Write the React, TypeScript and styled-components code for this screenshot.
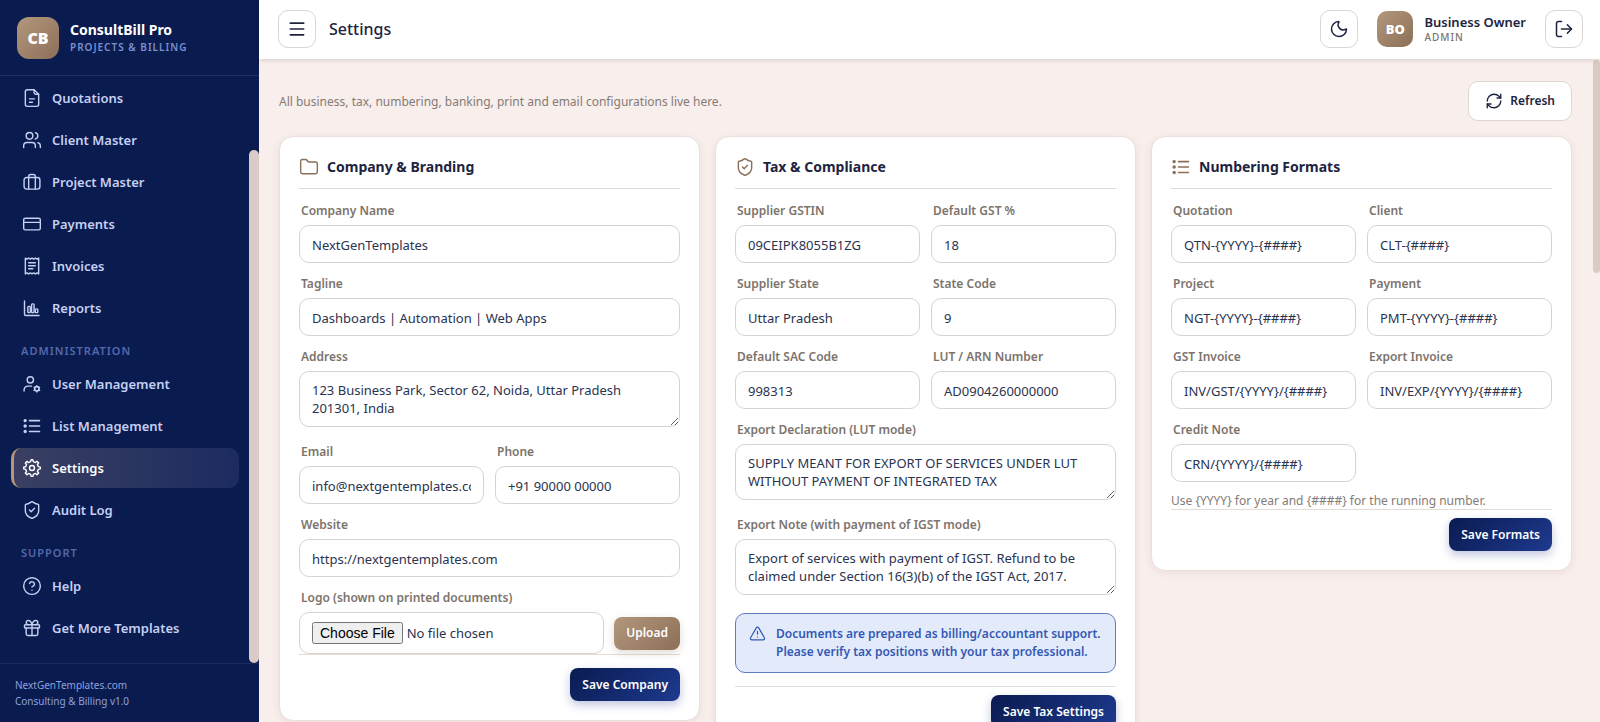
import React, { useId } from 'react';
import styled, { createGlobalStyle, css } from 'styled-components';
import {
  CircleHelp,
  CreditCard,
  Folder,
  Gift,
  LogOut,
  Menu,
  Moon,
  RefreshCw,
  ShieldCheck,
  TriangleAlert,
  Users,
} from 'lucide-react';

const GlobalStyle = createGlobalStyle`
  *, *::before, *::after { box-sizing: border-box; }
  html, body, #root { height: 100%; }
  body {
    margin: 0;
    background: #f8eeec;
    color: #1e2440;
    font: 14px/18px 'Segoe UI', 'Noto Sans', 'Open Sans', sans-serif;
  }
  button, input, textarea { font: inherit; }
`;

/* ---------- icons ---------- */

const Drawing = styled.svg.attrs({ viewBox: '0 0 24 24' })`
  width: 20px;
  height: 20px;
  fill: none;
  stroke: currentColor;
  stroke-width: 1.7;
  stroke-linecap: round;
  stroke-linejoin: round;
`;

const DocumentIcon = () => (
  <Drawing>
    <path d="M14.5 2H6.500A2.500 2.500 0 0 0 4 4.500v15A2.500 2.500 0 0 0 6.500 22h11a2.500 2.500 0 0 0 2.500-2.500V7.500z" />
    <path d="M14.500 2v3.500a2 2 0 0 0 2 2H20M9 13h6M9 17h3.500" />
  </Drawing>
);

const SuitcaseIcon = () => (
  <Drawing>
    <rect x="2.5" y="6.5" width="19" height="14" rx="3" />
    <path d="M8 20.500V5.500A2.500 2.500 0 0 1 10.500 3h3A2.500 2.500 0 0 1 16 5.500v15" />
  </Drawing>
);

const ReceiptIcon = () => (
  <Drawing>
    <path d="M4 2.500l2 1.200 2-1.200 2 1.200 2-1.200 2 1.200 2-1.200 2 1.200 2-1.200v19l-2-1.200-2 1.200-2-1.200-2 1.200-2-1.200-2 1.200-2-1.200-2 1.200z" />
    <path d="M8 8h8M8 11.700h8M8 15.400h5" />
  </Drawing>
);

const ChartIcon = () => (
  <Drawing>
    <path d="M3 3.500v16A1.500 1.500 0 0 0 4.500 21H20.500" />
    <rect x="7" y="10" width="3" height="7.500" rx="1" />
    <rect x="11.500" y="7" width="3" height="10.500" rx="1" />
    <rect x="16" y="13" width="3" height="4.500" rx="1" />
  </Drawing>
);

const UserGearIcon = () => (
  <Drawing>
    <circle cx="10" cy="7" r="3.800" />
    <path d="M2.500 20.500v-1.500a4.500 4.500 0 0 1 4.500-4.500h4.500" />
    <circle cx="17.800" cy="17.800" r="2.600" strokeWidth="2" />
    <path d="M17.800 14v.8M17.800 20.800v.8M14.500 15.900l.7.400M20.400 19.300l.7.400M14.500 19.700l.7-.4M20.400 16.300l.7-.4" />
  </Drawing>
);

const ListIcon = () => (
  <Drawing>
    <path d="M9 5.500h12M9 12h12M9 18.500h12" strokeWidth="1.900" />
    <g fill="currentColor">
      <circle cx="3.800" cy="5.500" r="1.200" />
      <circle cx="3.800" cy="12" r="1.200" />
      <circle cx="3.800" cy="18.500" r="1.200" />
    </g>
  </Drawing>
);

const GearIcon = () => (
  <Drawing>
    <circle cx="12" cy="12" r="3" />
    <path d="M19.620 10.400 18.520 7.740 20 6l-2-2-1.740 1.480-2.700-1.110L12.940 2h-1.960l-.63 2.400-2.650 1.120L6 4 4 6l1.450 1.790-1.080 2.660L2 11v2l2.400.66 1.120 2.640L4 18l2 2 1.790-1.460 2.610 1.070L11 22h2l.6-2.390 2.660-1.090L18 20l2-2-1.480-1.750 1.090-2.650 2.390-.62V11z" />
  </Drawing>
);

/* ---------- frame ---------- */

const Shell = styled.div`
  display: flex;
  height: 100vh;
  min-height: 480px;
  overflow: hidden;
`;

const Sidebar = styled.aside`
  flex: none;
  width: 259px;
  display: flex;
  flex-direction: column;
  background: #0a1b50;
  color: #c5d0f2;
`;

const Brand = styled.div`
  display: flex;
  align-items: center;
  gap: 11px;
  height: 76px;
  padding: 0 17px;
  border-bottom: 1px solid #1d2d63;
`;

const Badge = styled.span<{ $size: number }>`
  flex: none;
  display: grid;
  place-items: center;
  width: ${(p) => p.$size}px;
  height: ${(p) => p.$size}px;
  border-radius: ${(p) => (p.$size > 40 ? 12 : 10)}px;
  background: linear-gradient(135deg, #b3977d, #8b6f57);
  color: #fff;
  font-size: ${(p) => (p.$size > 40 ? 16 : 13)}px;
  font-weight: 900;
`;

const BrandText = styled.div`
  display: flex;
  flex-direction: column;
`;

const BrandName = styled.strong`
  color: #fff;
  font-size: 14px;
`;

const BrandTag = styled.span`
  color: #7b8fce;
  font-size: 10px;
  line-height: 16px;
  font-weight: 600;
  letter-spacing: 1px;
`;

const NavArea = styled.div`
  flex: 1;
  min-height: 0;
  display: flex;
`;

const Nav = styled.nav`
  flex: 1;
  overflow: hidden;
  display: flex;
  flex-direction: column;
  gap: 2px;
  padding: 2px 10px 0 11px;
`;

const NavLink = styled.a<{ $active?: boolean }>`
  flex: none;
  display: flex;
  align-items: center;
  gap: 10px;
  height: 40px;
  padding-left: 8px;
  border-left: 3px solid transparent;
  border-radius: 10px;
  color: inherit;
  font-size: 13px;
  font-weight: 600;
  text-decoration: none;
  ${(p) =>
    p.$active &&
    css`
      border-left-color: #b3977d;
      background: linear-gradient(90deg, #3a3f62, #1c2b60);
      color: #fff;
    `}
`;

const NavHeading = styled.h2`
  flex: none;
  margin: 0;
  padding: 13px 0 0 10px;
  height: 32px;
  color: #5468aa;
  font-size: 11px;
  line-height: 16px;
  font-weight: 600;
  letter-spacing: 1px;
  text-transform: uppercase;
`;

const NavScroll = styled.div`
  flex: none;
  width: 10px;
  padding-top: 74px;
  display: flex;
`;

const Thumb = styled.span`
  flex: 1;
  border-radius: 5px;
  background: #dacbc6;
`;

const SideFooter = styled.footer`
  height: 59px;
  padding: 13px 15px;
  border-top: 1px solid #1a2a60;
  color: #8ea1dc;
  font-size: 10px;
  line-height: 16px;
`;

const Main = styled.div`
  flex: 1;
  min-width: 0;
  display: flex;
  flex-direction: column;
`;

const TopBar = styled.header`
  flex: none;
  z-index: 1;
  display: flex;
  align-items: center;
  height: 59px;
  padding: 0 17px 2px 19px;
  background: #fff;
  box-shadow: 0 1px 5px rgba(40, 20, 40, 0.15);
`;

const PageTitle = styled.h1`
  flex: 1;
  margin: 0 0 0 13px;
  font-size: 16px;
  line-height: 24px;
  font-weight: 500;
`;

const IconButton = styled.button`
  display: grid;
  place-items: center;
  width: 38px;
  height: 38px;
  padding: 0;
  border: 1px solid #ddd5cf;
  border-radius: 10px;
  background: #fff;
  color: #1e2440;
`;

const UserBox = styled.div`
  display: flex;
  align-items: center;
  gap: 11px;
  margin: 0 19px;
`;

const UserText = styled.div`
  display: flex;
  flex-direction: column;
  font-size: 13px;
  line-height: 16px;
  font-weight: 600;
`;

const Role = styled.span`
  color: #7c736c;
  font-size: 10px;
  line-height: 14px;
  font-weight: 500;
  letter-spacing: 1px;
`;

const Scroller = styled.div`
  flex: 1;
  min-height: 0;
  display: flex;
`;

const Content = styled.main`
  flex: 1;
  min-width: 0;
  overflow: hidden;
  padding: 22px 21px 22px 20px;
`;

const PageScroll = styled.div`
  flex: none;
  width: 7px;
  height: 214px;
  display: flex;
  padding-top: 1px;

  ${Thumb} {
    background: #d8ccc3;
  }
`;

const Intro = styled.div`
  display: flex;
  align-items: center;
  justify-content: space-between;
  margin-bottom: 15px;
`;

const Muted = styled.p`
  margin: 0;
  color: #857b76;
  font-size: 12px;
  line-height: 17px;
`;

const RefreshButton = styled.button`
  display: flex;
  align-items: center;
  gap: 7px;
  height: 40px;
  padding: 0 16px;
  border: 1px solid #ddd5cf;
  border-radius: 10px;
  background: #fff;
  color: #1e2440;
  font-size: 12px;
  font-weight: 600;
`;

/* ---------- cards and fields ---------- */

const Cards = styled.div`
  display: grid;
  grid-template-columns: repeat(3, minmax(0, 1fr));
  align-items: start;
  gap: 15px;
`;

const Card = styled.form`
  padding: 19px;
  border: 1px solid #eadfdb;
  border-radius: 14px;
  background: #fff;
  box-shadow: 0 2px 8px rgba(60, 30, 40, 0.07);
`;

const CardTitle = styled.h2`
  display: flex;
  align-items: center;
  gap: 8px;
  height: 33px;
  margin: 0 0 13px;
  padding-bottom: 11px;
  border-bottom: 1px solid #e0d9d4;
  font-size: 14px;
  line-height: 22px;
  font-weight: 700;

  svg { color: #8b6f57; }
`;

const FieldGrid = styled.div`
  display: grid;
  grid-template-columns: repeat(2, minmax(0, 1fr));
  gap: 12px 11px;
`;

const FieldBox = styled.div<{ $wide?: boolean }>`
  display: flex;
  flex-direction: column;
  gap: 5px;
  grid-column: ${(p) => (p.$wide ? '1 / -1' : 'auto')};
`;

const Label = styled.label`
  padding-left: 2px;
  color: #7c736c;
  font-size: 12px;
  line-height: 18px;
  font-weight: 600;
`;

const box = css`
  width: 100%;
  border: 1px solid #d9d3cd;
  border-radius: 10px;
  background: #fff;
  color: #2a3350;
  font-size: 13px;
  outline: none;
`;

const TextInput = styled.input`
  ${box}
  height: 38px;
  padding: 1px 12px 0;
`;

const TextArea = styled.textarea`
  ${box}
  display: block;
  height: 56px;
  margin-bottom: 4px;
  padding: 9px 12px;
  line-height: 18px;
  overflow: hidden;
  resize: vertical;
`;

const UploadRow = styled.div`
  display: flex;
  align-items: center;
  gap: 10px;
`;

const FileInput = styled.input`
  ${box}
  flex: 1;
  min-width: 0;
  height: 42px;
  padding: 9px 12px;

  &::file-selector-button {
    font: 14px 'Liberation Sans', Arial, sans-serif;
  }
`;

const SolidButton = styled.button<{ $tone?: 'tan' }>`
  flex: none;
  height: 33px;
  padding: 0 12px;
  border: 0;
  border-radius: 8px;
  color: #fff;
  font-size: 12px;
  font-weight: 600;
  background: ${(p) =>
    p.$tone === 'tan'
      ? 'linear-gradient(135deg, #b3977d, #8b6f57)'
      : 'linear-gradient(135deg, #0a1b50, #1e3a8f)'};
  box-shadow: ${(p) =>
    p.$tone === 'tan' ? '0 3px 8px rgba(139, 111, 87, 0.25)' : '0 4px 10px rgba(30, 50, 140, 0.28)'};
`;

const CardFooter = styled.div<{ $roomy?: boolean }>`
  display: flex;
  justify-content: flex-end;
  padding-top: ${(p) => (p.$roomy ? 13 : 8)}px;
  border-top: 1px solid #e6dcd6;
`;

const Hint = styled(Muted)`
  margin-top: 10px;
`;

const Notice = styled.div`
  display: flex;
  gap: 10px;
  margin: 14px 0 13px;
  padding: 11px 13px;
  border: 1px solid #5f7cc0;
  border-radius: 10px;
  background: #e3ebfb;
  color: #3558b4;
  font-size: 12px;
  line-height: 18px;
  font-weight: 600;

  svg { flex: none; }
`;

type FieldProps = { label: string; value: string; wide?: boolean; multiline?: boolean };

function Field({ label, value, wide, multiline }: FieldProps) {
  const id = useId();
  return (
    <FieldBox $wide={wide || multiline}>
      <Label htmlFor={id}>{label}</Label>
      {multiline ? <TextArea id={id} defaultValue={value} /> : <TextInput id={id} defaultValue={value} />}
    </FieldBox>
  );
}

const line = { size: 20, strokeWidth: 1.7 };

const mainLinks = [
  { text: 'Quotations', icon: <DocumentIcon /> },
  { text: 'Client Master', icon: <Users {...line} /> },
  { text: 'Project Master', icon: <SuitcaseIcon /> },
  { text: 'Payments', icon: <CreditCard {...line} /> },
  { text: 'Invoices', icon: <ReceiptIcon /> },
  { text: 'Reports', icon: <ChartIcon /> },
];

const adminLinks = [
  { text: 'User Management', icon: <UserGearIcon /> },
  { text: 'List Management', icon: <ListIcon /> },
  { text: 'Settings', icon: <GearIcon />, active: true },
  { text: 'Audit Log', icon: <ShieldCheck {...line} /> },
];

const supportLinks = [
  { text: 'Help', icon: <CircleHelp {...line} /> },
  { text: 'Get More Templates', icon: <Gift {...line} /> },
];

type LinkItem = { text: string; icon: React.ReactNode; active?: boolean };

const Links = ({ items }: { items: LinkItem[] }) => (
  <>
    {items.map((item) => (
      <NavLink key={item.text} href="#" $active={item.active} aria-current={item.active ? 'page' : undefined}>
        {item.icon}
        {item.text}
      </NavLink>
    ))}
  </>
);

export default function App() {
  return (
    <Shell>
      <GlobalStyle />
      <Sidebar>
        <Brand>
          <Badge $size={42}>CB</Badge>
          <BrandText>
            <BrandName>ConsultBill Pro</BrandName>
            <BrandTag>PROJECTS &amp; BILLING</BrandTag>
          </BrandText>
        </Brand>
        <NavArea>
          <Nav>
            <Links items={mainLinks} />
            <NavHeading>Administration</NavHeading>
            <Links items={adminLinks} />
            <NavHeading>Support</NavHeading>
            <Links items={supportLinks} />
          </Nav>
          <NavScroll aria-hidden>
            <Thumb />
          </NavScroll>
        </NavArea>
        <SideFooter>
          NextGenTemplates.com
          <br />
          Consulting &amp; Billing v1.0
        </SideFooter>
      </Sidebar>

      <Main>
        <TopBar>
          <IconButton aria-label="Toggle menu">
            <Menu size={20} strokeWidth={2} />
          </IconButton>
          <PageTitle>Settings</PageTitle>
          <IconButton aria-label="Dark mode">
            <Moon size={20} strokeWidth={1.8} />
          </IconButton>
          <UserBox>
            <Badge $size={36}>BO</Badge>
            <UserText>
              <span>Business Owner</span>
              <Role>ADMIN</Role>
            </UserText>
          </UserBox>
          <IconButton aria-label="Log out">
            <LogOut size={20} strokeWidth={1.8} />
          </IconButton>
        </TopBar>

        <Scroller>
          <Content>
            <Intro>
              <Muted>All business, tax, numbering, banking, print and email configurations live here.</Muted>
              <RefreshButton>
                <RefreshCw size={18} strokeWidth={1.8} />
                Refresh
              </RefreshButton>
            </Intro>

            <Cards>
              <Card onSubmit={(e) => e.preventDefault()}>
                <CardTitle>
                  <Folder {...line} />
                  Company &amp; Branding
                </CardTitle>
                <FieldGrid>
                  <Field wide label="Company Name" value="NextGenTemplates" />
                  <Field wide label="Tagline" value="Dashboards | Automation | Web Apps" />
                  <Field
                    multiline
                    label="Address"
                    value={'123 Business Park, Sector 62, Noida, Uttar Pradesh\n201301, India'}
                  />
                  <Field label="Email" value="info@nextgentemplates.com" />
                  <Field label="Phone" value="+91 90000 00000" />
                  <Field wide label="Website" value="https://nextgentemplates.com" />
                  <FieldBox $wide>
                    <Label htmlFor="logo-file">Logo (shown on printed documents)</Label>
                    <UploadRow>
                      <FileInput id="logo-file" type="file" />
                      <SolidButton type="button" $tone="tan">Upload</SolidButton>
                    </UploadRow>
                  </FieldBox>
                </FieldGrid>
                <CardFooter $roomy>
                  <SolidButton>Save Company</SolidButton>
                </CardFooter>
              </Card>

              <Card onSubmit={(e) => e.preventDefault()}>
                <CardTitle>
                  <ShieldCheck {...line} />
                  Tax &amp; Compliance
                </CardTitle>
                <FieldGrid>
                  <Field label="Supplier GSTIN" value="09CEIPK8055B1ZG" />
                  <Field label="Default GST %" value="18" />
                  <Field label="Supplier State" value="Uttar Pradesh" />
                  <Field label="State Code" value="9" />
                  <Field label="Default SAC Code" value="998313" />
                  <Field label="LUT / ARN Number" value="AD0904260000000" />
                  <Field
                    multiline
                    label="Export Declaration (LUT mode)"
                    value={'SUPPLY MEANT FOR EXPORT OF SERVICES UNDER LUT\nWITHOUT PAYMENT OF INTEGRATED TAX'}
                  />
                  <Field
                    multiline
                    label="Export Note (with payment of IGST mode)"
                    value={'Export of services with payment of IGST. Refund to be\nclaimed under Section 16(3)(b) of the IGST Act, 2017.'}
                  />
                </FieldGrid>
                <Notice role="note">
                  <TriangleAlert size={17} strokeWidth={1.7} />
                  <span>
                    Documents are prepared as billing/accountant support.
                    <br />
                    Please verify tax positions with your tax professional.
                  </span>
                </Notice>
                <CardFooter>
                  <SolidButton>Save Tax Settings</SolidButton>
                </CardFooter>
              </Card>

              <Card onSubmit={(e) => e.preventDefault()}>
                <CardTitle>
                  <ListIcon />
                  Numbering Formats
                </CardTitle>
                <FieldGrid>
                  <Field label="Quotation" value="QTN-{YYYY}-{####}" />
                  <Field label="Client" value="CLT-{####}" />
                  <Field label="Project" value="NGT-{YYYY}-{####}" />
                  <Field label="Payment" value="PMT-{YYYY}-{####}" />
                  <Field label="GST Invoice" value="INV/GST/{YYYY}/{####}" />
                  <Field label="Export Invoice" value="INV/EXP/{YYYY}/{####}" />
                  <Field label="Credit Note" value="CRN/{YYYY}/{####}" />
                </FieldGrid>
                <Hint>{'Use {YYYY} for year and {####} for the running number.'}</Hint>
                <CardFooter>
                  <SolidButton>Save Formats</SolidButton>
                </CardFooter>
              </Card>
            </Cards>
          </Content>
          <PageScroll aria-hidden>
            <Thumb />
          </PageScroll>
        </Scroller>
      </Main>
    </Shell>
  );
}
